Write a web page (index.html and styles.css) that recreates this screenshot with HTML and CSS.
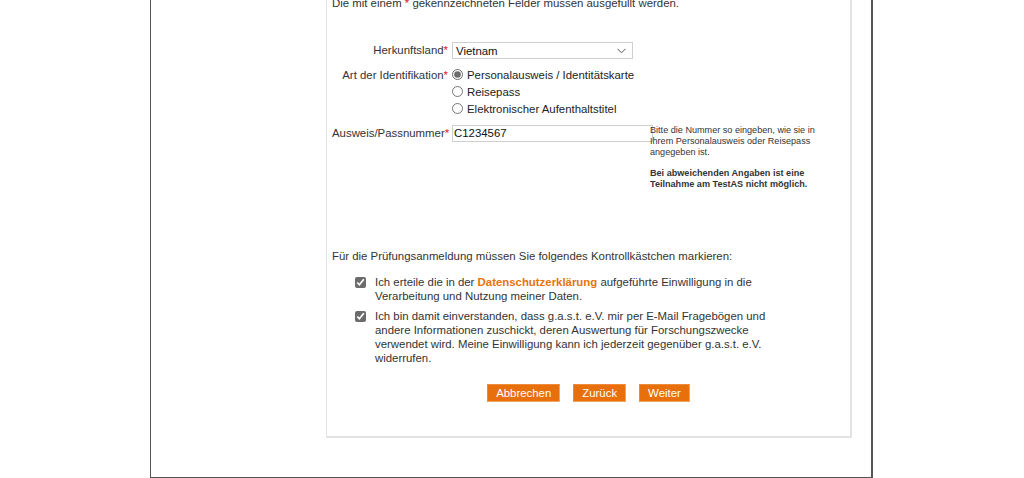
FILE: index.html
```html
<!DOCTYPE html>
<html lang="de">
<head>
<meta charset="utf-8">
<title>TestAS Anmeldung</title>
<link rel="stylesheet" href="styles.css">
</head>
<body>
<div class="outer">
  <div class="panel">
    <p class="note">Die mit einem <span class="req">*</span> gekennzeichneten Felder müssen ausgefüllt werden.</p>
    <div class="form">
      <label class="lbl row1">Herkunftsland<span class="req">*</span></label>
      <div class="ctl row1">
        <div class="select"><span>Vietnam</span>
          <svg class="chev" width="9" height="6" viewBox="0 0 9 6"><path d="M0.5 0.8 L4.5 4.8 L8.5 0.8" fill="none" stroke="#555" stroke-width="1"/></svg>
        </div>
      </div>
      <label class="lbl row2">Art der Identifikation<span class="req">*</span></label>
      <div class="ctl row2 radios">
        <label class="radio"><input type="radio" name="id" checked>Personalausweis / Identitätskarte</label>
        <label class="radio"><input type="radio" name="id">Reisepass</label>
        <label class="radio"><input type="radio" name="id">Elektronischer Aufenthaltstitel</label>
      </div>
      <label class="lbl row3">Ausweis/Passnummer<span class="req">*</span></label>
      <div class="ctl row3"><div class="text">C1234567</div></div>
      <div class="help row3">
        <p>Bitte die Nummer so eingeben, wie sie in Ihrem Personalausweis oder Reisepass angegeben ist.</p>
        <p class="strong">Bei abweichenden Angaben ist eine Teilnahme am TestAS nicht möglich.</p>
      </div>
    </div>
    <p class="intro">Für die Prüfungsanmeldung müssen Sie folgendes Kontrollkästchen markieren:</p>
    <ul class="checks">
      <li><input type="checkbox" checked><span>Ich erteile die in der <a href="#">Datenschutzerklärung</a> aufgeführte Einwilligung in die Verarbeitung und Nutzung meiner Daten.</span></li>
      <li><input type="checkbox" checked><span>Ich bin damit einverstanden, dass g.a.s.t. e.V. mir per E-Mail Fragebögen und andere Informationen zuschickt, deren Auswertung für Forschungszwecke verwendet wird. Meine Einwilligung kann ich jederzeit gegenüber g.a.s.t. e.V. widerrufen.</span></li>
    </ul>
    <div class="buttons">
      <button class="btn">Abbrechen</button>
      <button class="btn">Zurück</button>
      <button class="btn">Weiter</button>
    </div>
  </div>
</div>
</body>
</html>
```
FILE: styles.css
```css
* { box-sizing: border-box; }
html, body { margin: 0; padding: 0; background: #fff; }
body {
  font-family: "Liberation Sans", Arial, sans-serif;
  font-size: 11.4px;
  color: #333;
  overflow: hidden;
}
.outer {
  margin-left: 150px;
  width: 723px;
  margin-top: -5px;
  border-left: 1px solid #555;
  border-right: 2px solid #555;
  border-bottom: 2px solid #555;
  padding-left: 175px;
  padding-bottom: 39px;
}
.panel {
  width: 526px;
  border: 1px solid #e3e3e3;
  border-top: none;
  border-right-width: 2px;
  border-bottom-width: 2px;
  padding: 0 0 34px 5px;
}
.note { margin: 0; line-height: 14px; padding-top: 1px; }
.req { color: #e02020; }
.form {
  display: grid;
  grid-template-columns: 116px 198px 1fr;
  column-gap: 4px;
  margin-top: 32px;
}
.lbl { text-align: right; line-height: 17px; white-space: nowrap; }
.row1 { grid-row: 1; }
.row2 { grid-row: 2; margin-top: 7px; }
.row3 { grid-row: 3; margin-top: 8px; }
.lbl.row2 { margin-top: 8px; }
.lbl { grid-column: 1; }
.ctl { grid-column: 2; }
.help { grid-column: 3; }
.select {
  width: 181px;
  height: 17px;
  border: 1px solid #cfcfcf;
  display: flex;
  align-items: center;
  justify-content: space-between;
  padding: 0 6px 0 3px;
  color: #111;
}
.radios { display: flex; flex-direction: column; }
.radio { display: flex; align-items: center; height: 17px; color: #222; }
.radio input {
  margin: 0 4px 0 0;
  width: 11px; height: 11px;
  accent-color: #6c6c6c;
}
.text {
  width: 201px;
  height: 17px;
  border: 1px solid #cfcfcf;
  padding: 0 0 0 1px;
  line-height: 15px;
  color: #111;
}
.help {
  font-size: 9.1px;
  line-height: 11px;
  margin-left: -4px;
  padding-top: 0;
  width: 175px;
  color: #333;
}
.help p { margin: 0 0 10px 0; }
.help .strong { font-weight: bold; margin: 0; }
.intro { margin: 59px 0 0 0; line-height: 14px; }
.checks { list-style: none; margin: 13px 0 0 0; padding: 0 0 0 23px; }
.checks li { display: flex; align-items: flex-start; line-height: 13.7px; margin-bottom: 7px; width: 416px; }
.checks input {
  margin: 1px 9px 0 0;
  width: 11px; height: 11px;
  flex: none;
  accent-color: #6c6c6c;
}
.checks a { color: #e8730c; font-weight: bold; text-decoration: none; }
.buttons { display: flex; justify-content: center; gap: 13px; margin-top: 19px; padding-right: 5px; }
.btn {
  font-family: "Liberation Sans", Arial, sans-serif;
  font-size: 11.4px;
  color: #fff;
  background: #e8700c;
  border: 1px solid #f3a664;
  border-top-color: #ef8c3c;
  border-left-color: #ef8c3c;
  height: 18px;
  padding: 0 8px;
  line-height: 16px;
}
```
